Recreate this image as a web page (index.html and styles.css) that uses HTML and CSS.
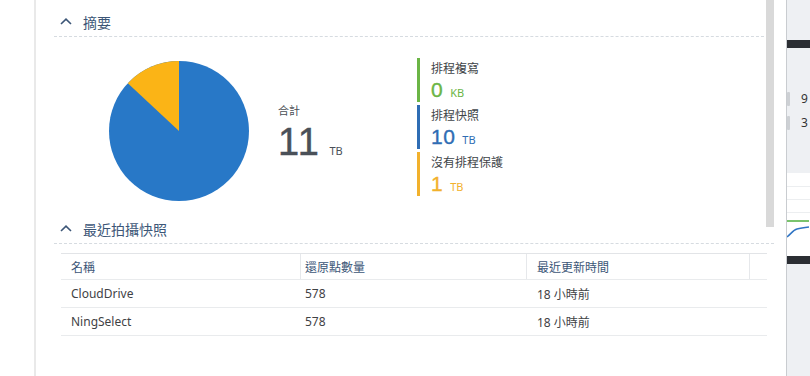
FILE: index.html
```html
<!DOCTYPE html>
<html lang="zh-Hant">
<head>
<meta charset="utf-8">
<link rel="stylesheet" href="styles.css">
</head>
<body>
<div class="app">
  <div class="left-strip"></div>
  <div class="panel">
    <div class="scrollbar"></div>
    <div class="section-head">
      <svg class="chev" width="12" height="7" viewBox="0 0 12 7"><path d="M1 6 L6 1.2 L11 6" fill="none" stroke="#3c5677" stroke-width="1.6"/></svg>
      <span>摘要</span>
    </div>
    <div class="summary">
      <svg class="pie" width="140" height="140" viewBox="0 0 140 140">
        <circle cx="70" cy="70" r="70" fill="#2878c7"/>
        <path d="M70 70 L70 0 A70 70 0 0 0 18.8 22.3 Z" fill="#fbb416"/>
      </svg>
      <div class="total">
        <div class="total-label">合計</div>
        <div class="total-value"><span class="big">11</span><span class="unit">TB</span></div>
      </div>
      <div class="legend">
        <div class="legend-item green">
          <div class="legend-label">排程複寫</div>
          <div class="legend-value"><span class="num">0</span><span class="lu">KB</span></div>
        </div>
        <div class="legend-item blue">
          <div class="legend-label">排程快照</div>
          <div class="legend-value"><span class="num">10</span><span class="lu">TB</span></div>
        </div>
        <div class="legend-item yellow">
          <div class="legend-label">沒有排程保護</div>
          <div class="legend-value"><span class="num">1</span><span class="lu">TB</span></div>
        </div>
      </div>
    </div>
    <div class="section-head">
      <svg class="chev" width="12" height="7" viewBox="0 0 12 7"><path d="M1 6 L6 1.2 L11 6" fill="none" stroke="#3c5677" stroke-width="1.6"/></svg>
      <span>最近拍攝快照</span>
    </div>
    <div class="table">
      <div class="row head">
        <div class="cell c1">名稱</div>
        <div class="cell c2">還原點數量</div>
        <div class="cell c3">最近更新時間</div>
        <div class="cell c4"></div>
      </div>
      <div class="row">
        <div class="cell c1">CloudDrive</div>
        <div class="cell c2">578</div>
        <div class="cell c3">18 小時前</div>
        <div class="cell c4"></div>
      </div>
      <div class="row">
        <div class="cell c1">NingSelect</div>
        <div class="cell c2">578</div>
        <div class="cell c3">18 小時前</div>
        <div class="cell c4"></div>
      </div>
    </div>
  </div>
  <div class="right-strip">
    <div class="rs-top"></div>
    <div class="rs-bar"></div>
    <div class="rs-list">
      <div class="rs-item"><span class="pill"></span><span class="rs-num">9</span></div>
      <div class="rs-item"><span class="pill"></span><span class="rs-num">3</span></div>
    </div>
    <div class="rs-chart">
      <div class="rs-line"></div>
      <div class="rs-line"></div>
      <div class="rs-line"></div>
      <svg width="22" height="32" viewBox="0 0 22 32" class="rs-svg">
        <path d="M0 9 L22 9" stroke="#4caf3c" stroke-width="1.5" fill="none"/>
        <path d="M0 25 C4 22 6 18 10 17 C14 16 18 15.5 22 15" stroke="#2f74c4" stroke-width="1.5" fill="none"/>
      </svg>
    </div>
    <div class="rs-bar"></div>
    <div class="rs-bottom"></div>
  </div>
</div>
</body>
</html>
```

FILE: styles.css
```css
* { box-sizing: border-box; }
html, body { margin: 0; padding: 0; }
body {
  width: 810px;
  height: 376px;
  overflow: hidden;
  background: #fff;
  font-family: "Noto Sans", "Noto Sans CJK TC", sans-serif;
  color: #404448;
}
.app {
  display: flex;
  height: 376px;
}
.left-strip {
  width: 36px;
  flex: none;
  background: #fff;
  border-right: 2px solid #e9e9e9;
}
.panel {
  position: relative;
  width: 750px;
  flex: none;
  background: #fff;
  padding: 8px 14px 0 18px;
}
.scrollbar {
  position: absolute;
  left: 730px;
  top: 0;
  width: 8px;
  height: 227px;
  background: #d9d9d9;
}
.section-head {
  height: 29px;
  display: flex;
  align-items: center;
  gap: 11px;
  padding-left: 6px;
  border-bottom: 1px dashed #d6dbe0;
  font-family: "Noto Sans CJK TC", sans-serif;
  font-size: 14px;
  color: #3c5677;
  width: 720px;
}
.chev { flex: none; margin-top: -1px; }
.summary {
  height: 178px;
  display: flex;
  align-items: flex-start;
  padding: 24px 0 0 55px;
}
.pie { flex: none; display: block; }
.total {
  margin-left: 29px;
  margin-top: 42px;
  width: 139px;
}
.total-label {
  font-family: "Noto Sans CJK TC", sans-serif;
  font-size: 11px;
  line-height: 14px;
  color: #4a4f55;
}
.total-value {
  display: flex;
  align-items: baseline;
  margin-top: 10px;
}
.big {
  font-family: "Liberation Sans", sans-serif;
  font-size: 38px;
  line-height: 30px;
  color: #4a5058;
  letter-spacing: 1.5px;
  -webkit-text-stroke: 0.45px #4a5058;
}
.unit {
  font-size: 11px;
  color: #4a5058;
  margin-left: 9px;
}
.legend {
  display: flex;
  flex-direction: column;
  gap: 3px;
  margin-top: -3px;
}
.legend-item {
  height: 44px;
  border-left: 3px solid;
  padding-left: 11px;
}
.legend-item.green { border-color: #6bb546; color: #6bb546; }
.legend-item.blue { border-color: #2f6db4; color: #2f6db4; }
.legend-item.yellow { border-color: #f2b12c; color: #f2b12c; }
.legend-label {
  font-family: "Noto Sans CJK TC", sans-serif;
  font-size: 12px;
  line-height: 20px;
  color: #404448;
}
.legend-value {
  display: flex;
  align-items: baseline;
  line-height: 24px;
}
.num {
  font-family: "Liberation Sans", sans-serif;
  font-size: 21px;
  -webkit-text-stroke: 0.35px currentColor;
  letter-spacing: 0.5px;
}
.lu { font-size: 11px; margin-left: 7px; }
.table {
  margin: 9px 0 0 7px;
  width: 706px;
  border-top: 1px solid #e2e4e7;
}
.row {
  display: flex;
  height: 28px;
  border-bottom: 1px solid #e9ebed;
  font-size: 12px;
  color: #3f4245;
}
.row.head {
  height: 26px;
  color: #3c5677;
}
.cell {
  display: flex;
  align-items: center;
  padding-left: 10px;
  font-family: "Noto Sans", "Noto Sans CJK TC", sans-serif;
}
.row.head .cell { font-family: "Noto Sans CJK TC", sans-serif; }
.c1 { width: 240px; }
.c2 { width: 226px; padding-left: 4px; }
.c3 { width: 223px; }
.c4 { flex: 1; }
.row.head .c1, .row.head .c2, .row.head .c3 { border-right: 1px solid #e6e8eb; }
.right-strip {
  flex: 1;
  display: flex;
  flex-direction: column;
  background: #eef0f3;
  border-left: 1px solid #c9ccd0;
  overflow: hidden;
}
.rs-top { height: 40px; }
.rs-bar { height: 8px; background: #2b2e33; flex: none; }
.rs-list {
  height: 125px;
  padding-top: 44px;
  display: flex;
  flex-direction: column;
  gap: 10px;
}
.rs-item {
  display: flex;
  align-items: center;
  height: 14px;
  font-size: 12px;
  color: #333;
}
.pill {
  width: 3px;
  height: 14px;
  background: #cdd0d4;
  border-radius: 1px;
  margin-right: 11px;
}
.rs-num { line-height: 14px; }
.rs-chart {
  height: 83px;
  background: #fff;
  display: flex;
  flex-direction: column;
  padding-top: 13px;
}
.rs-line { height: 13px; border-top: 1px solid #eceef0; flex: none; }
.rs-svg { display: block; margin-top: -13px; flex: none; }
.rs-bottom { flex: 1; }
```
